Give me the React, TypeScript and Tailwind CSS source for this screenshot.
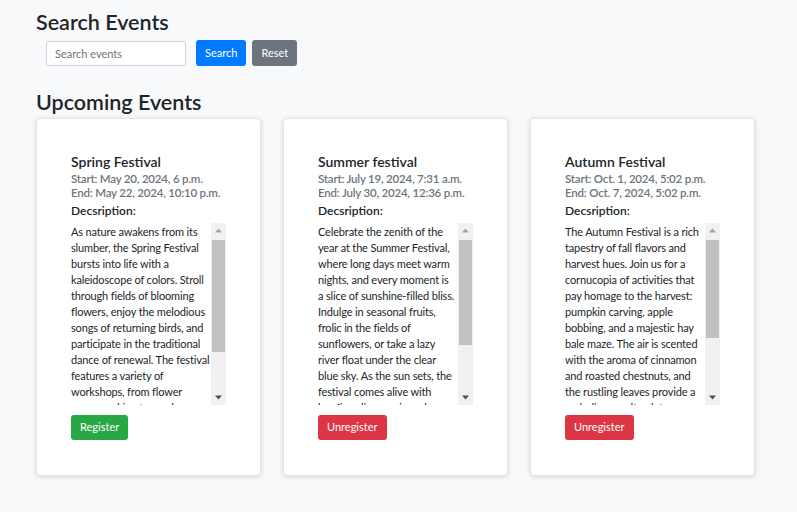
const events = [
  {
    title: "Spring Festival",
    start: "May 20, 2024, 6 p.m.",
    end: "May 22, 2024, 10:10 p.m.",
    description:
      "As nature awakens from its slumber, the Spring Festival bursts into life with a kaleidoscope of colors. Stroll through fields of blooming flowers, enjoy the melodious songs of returning birds, and participate in the traditional dance of renewal. The festival features a variety of workshops, from flower crown making to seed planting, and a grand parade to close the celebration.",
    registered: false,
    thumb: 112,
  },
  {
    title: "Summer festival",
    start: "July 19, 2024, 7:31 a.m.",
    end: "July 30, 2024, 12:36 p.m.",
    description:
      "Celebrate the zenith of the year at the Summer Festival, where long days meet warm nights, and every moment is a slice of sunshine-filled bliss. Indulge in seasonal fruits, frolic in the fields of sunflowers, or take a lazy river float under the clear blue sky. As the sun sets, the festival comes alive with bonfires, live music and dancing under the stars.",
    registered: true,
    thumb: 105,
  },
  {
    title: "Autumn Festival",
    start: "Oct. 1, 2024, 5:02 p.m.",
    end: "Oct. 7, 2024, 5:02 p.m.",
    description:
      "The Autumn Festival is a rich tapestry of fall flavors and harvest hues. Join us for a cornucopia of activities that pay homage to the harvest: pumpkin carving, apple bobbing, and a majestic hay bale maze. The air is scented with the aroma of cinnamon and roasted chestnuts, and the rustling leaves provide a melodic soundtrack to your autumn adventures.",
    registered: true,
    thumb: 98,
  },
];

function ScrollBar({ thumb }: { thumb: number }) {
  return (
    <div className="flex w-[15px] shrink-0 flex-col items-center bg-[#f1f1f1]">
      <svg width="15" height="15" viewBox="0 0 15 15" className="shrink-0">
        <path d="M4 9.5 L7.5 5.5 L11 9.5 Z" fill="#a3a3a3" />
      </svg>
      <div className="mt-[2px] w-[13px] bg-[#c1c1c1]" style={{ height: thumb }} />
      <div className="flex-1" />
      <svg width="15" height="15" viewBox="0 0 15 15" className="shrink-0">
        <path d="M4 5.5 L7.5 9.5 L11 5.5 Z" fill="#505050" />
      </svg>
    </div>
  );
}

function EventCard({ ev }: { ev: (typeof events)[number] }) {
  return (
    <div className="rounded bg-white shadow-[0_1px_5px_rgba(0,0,0,0.15)] border border-[#e3e6e9] px-[34px] pt-[33px] pb-[35px]">
      <h5 className="text-[14px] leading-[20px] font-semibold text-[#212529]">{ev.title}</h5>
      <p className="whitespace-nowrap text-[11.5px] leading-[14px] tracking-[-0.2px] font-semibold text-[#6c757d]">
        Start: {ev.start}
      </p>
      <p className="whitespace-nowrap text-[11.5px] leading-[14px] tracking-[-0.2px] font-semibold text-[#6c757d]">
        End: {ev.end}
      </p>
      <p className="mt-[3px] text-[12px] leading-[16px] font-semibold text-[#212529]">Decsription:</p>
      <div className="mt-[4px] flex h-[182px] w-[155px]">
        <div className="flex-1 overflow-hidden pr-[1.5px]">
          <p className="pt-[1px] text-[11px] leading-[16px] tracking-[-0.15px] text-[#212529]">{ev.description}</p>
        </div>
        <ScrollBar thumb={ev.thumb} />
      </div>
      <button
        className={
          ev.registered
            ? "mt-[10px] h-[25px] rounded-[3px] bg-[#dc3545] px-[9px] text-[11px] text-white"
            : "mt-[10px] h-[25px] rounded-[3px] bg-[#28a745] px-[9px] text-[11px] text-white"
        }
      >
        {ev.registered ? "Unregister" : "Register"}
      </button>
    </div>
  );
}

export default function App() {
  return (
    <div className="min-h-[512px] bg-[#f8f9fa] px-[36px] pt-[8px] font-['Lato',sans-serif] text-[#212529]">
      <h3 className="text-[21.5px] leading-[28px] font-semibold">Search Events</h3>
      <div className="ml-[10px] mt-[4px] flex items-center gap-[6px]">
        <input
          placeholder="Search events"
          className="mr-[4px] h-[25px] w-[140px] rounded-[3px] border border-[#ced4da] bg-white px-[8px] text-[11px] placeholder:text-[#6c757d]"
        />
        <button className="h-[26px] rounded-[3px] bg-[#007bff] px-[9px] text-[11px] text-white">Search</button>
        <button className="h-[26px] rounded-[3px] bg-[#6c757d] px-[9px] text-[11px] text-white">Reset</button>
      </div>
      <h3 className="mt-[22px] text-[21.5px] leading-[28px] font-semibold">Upcoming Events</h3>
      <div className="mt-[2px] grid w-[719px] grid-cols-3 gap-[22px]">
        {events.map((ev) => (
          <EventCard key={ev.title} ev={ev} />
        ))}
      </div>
    </div>
  );
}
